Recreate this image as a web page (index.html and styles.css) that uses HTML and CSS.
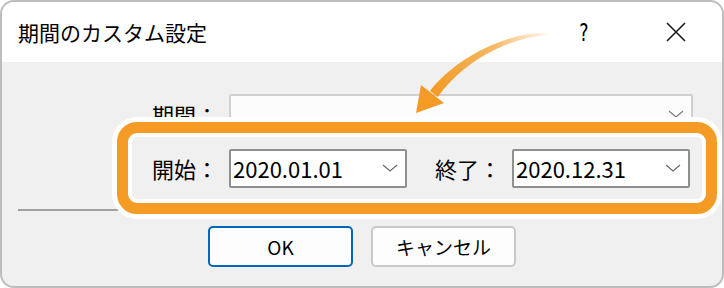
FILE: index.html
```html
<!DOCTYPE html>
<html lang="ja">
<head>
  <meta charset="UTF-8">
  <meta name="viewport" content="width=device-width, initial-scale=1.0">
  <title>期間のカスタム設定</title>
  <link rel="stylesheet" href="styles.css">
</head>
<body>
  <div class="dialog">
    <header class="titlebar">
      <span class="title">期間のカスタム設定</span>
      <span class="help">?</span>
      <span class="close">
        <svg width="20" height="20" viewBox="0 0 20 20">
          <path d="M1 1 L19 19 M19 1 L1 19" stroke="#1a1a1a" stroke-width="1.6" fill="none"/>
        </svg>
      </span>
    </header>

    <main class="content">
      <div class="row-period">
        <label class="label">期間：</label>
        <div class="combo combo-wide combo-disabled">
          <svg class="chevron" width="16" height="8" viewBox="0 0 16 8">
            <path d="M1 1 L8 7 L15 1" stroke="#7a7a7a" stroke-width="1.2" fill="none"/>
          </svg>
        </div>
      </div>

      <!-- highlighted start / end row -->
      <div class="callout">
        <label class="label">開始：</label>
        <div class="combo">
          <span class="combo-value">2020.01.01</span>
          <svg class="chevron" width="16" height="8" viewBox="0 0 16 8">
            <path d="M1 1 L8 7 L15 1" stroke="#6a6a6a" stroke-width="1.2" fill="none"/>
          </svg>
        </div>
        <label class="label label-end">終了：</label>
        <div class="combo">
          <span class="combo-value">2020.12.31</span>
          <svg class="chevron" width="16" height="8" viewBox="0 0 16 8">
            <path d="M1 1 L8 7 L15 1" stroke="#6a6a6a" stroke-width="1.2" fill="none"/>
          </svg>
        </div>
      </div>

      <hr class="separator">

      <div class="buttons">
        <button class="btn btn-primary">OK</button>
        <button class="btn">キャンセル</button>
      </div>
    </main>
  </div>

  <!-- pointer arrow over the dialog -->
  <svg class="arrow" width="724" height="288" viewBox="0 0 724 288">
    <defs>
      <linearGradient id="arrow-fade" gradientUnits="userSpaceOnUse" x1="548" y1="33" x2="440" y2="100">
        <stop offset="0" stop-color="#f39b25" stop-opacity="0.05"/>
        <stop offset="0.45" stop-color="#f4a843" stop-opacity="0.85"/>
        <stop offset="1" stop-color="#f39b25"/>
      </linearGradient>
    </defs>
    <path d="M548 32.5 C500 33 452 62 430 91 L438 97 C458 68 500 38.5 548 35 Z" fill="url(#arrow-fade)"/>
    <path d="M421 85 L444 103 L416 113 Z" fill="#f39b25"/>
  </svg>
</body>
</html>
```

FILE: styles.css
```css
/* General styling */
body {
  margin: 0;
  position: relative;
  font-family: "Noto Sans CJK JP", "Noto Sans", sans-serif;
  color: #000;
  background: #fff;
}

.dialog {
  width: 724px;
  height: 288px;
  box-sizing: border-box;
  border: 2px solid #bdbdbd;
  border-radius: 14px;
  overflow: hidden;
  background: #f0f0f0;
  display: flex;
  flex-direction: column;
}

/* Title bar */
.titlebar {
  height: 60px;
  flex-shrink: 0;
  background: #fff;
  display: flex;
  align-items: center;
  padding: 0 26px 0 16px;
}

.title {
  font-size: 21px;
  line-height: 1;
}

.help {
  margin-left: auto;
  width: 40px;
  text-align: center;
  font-family: "DejaVu Sans", sans-serif;
  font-size: 25px;
  line-height: 1;
  transform: scaleX(0.7);
}

.close {
  width: 40px;
  margin-left: 52px;
  display: flex;
  justify-content: center;
}

/* Body */
.content {
  flex: 1;
  padding: 32px 16px 0;
}

.label {
  width: 66px;
  font-size: 22px;
  line-height: 1;
  white-space: nowrap;
}

.row-period {
  display: flex;
  align-items: center;
  gap: 11px;
  margin-left: 134px;
}

.combo {
  width: 178px;
  height: 39px;
  box-sizing: border-box;
  border: 2px solid #8f8f8f;
  border-radius: 2px;
  background: #fff;
  display: flex;
  align-items: center;
  padding: 0 7px 0 2px;
}

.combo-wide {
  width: 464px;
}

.combo-disabled {
  border-color: #d0d0d0;
  background: #fcfcfc;
}

.combo-value {
  font-size: 22px;
  line-height: 1;
}

.chevron {
  margin-left: auto;
}

/* Orange highlight around the start / end row */
.callout {
  position: relative;
  z-index: 1;
  height: 92px;
  box-sizing: border-box;
  margin: -11px -11px 0 99px;
  padding: 0 16px 0 24px;
  border: 11px solid #f39b25;
  border-radius: 20px;
  background: #f0f0f0;
  box-shadow: 0 0 0 5px #fff, inset 0 0 0 4px #fff;
  display: flex;
  align-items: center;
  gap: 11px;
}

.label-end {
  margin-left: 17px;
}

.separator {
  margin: -5px 0 0;
  border: 0;
  border-top: 2px solid #a0a0a0;
  height: 0;
}

/* Buttons */
.buttons {
  display: flex;
  justify-content: center;
  gap: 18px;
  margin-top: 15px;
}

.btn {
  width: 145px;
  height: 41px;
  box-sizing: border-box;
  border: 2px solid #c9c9c9;
  border-radius: 5px;
  background: #fdfdfd;
  font-family: "Noto Sans CJK JP", "Noto Sans", sans-serif;
  font-size: 19px;
  color: #000;
  padding: 0;
}

.btn-primary {
  border-color: #0067c0;
}

.arrow {
  position: absolute;
  left: 0;
  top: 0;
  pointer-events: none;
}
```
